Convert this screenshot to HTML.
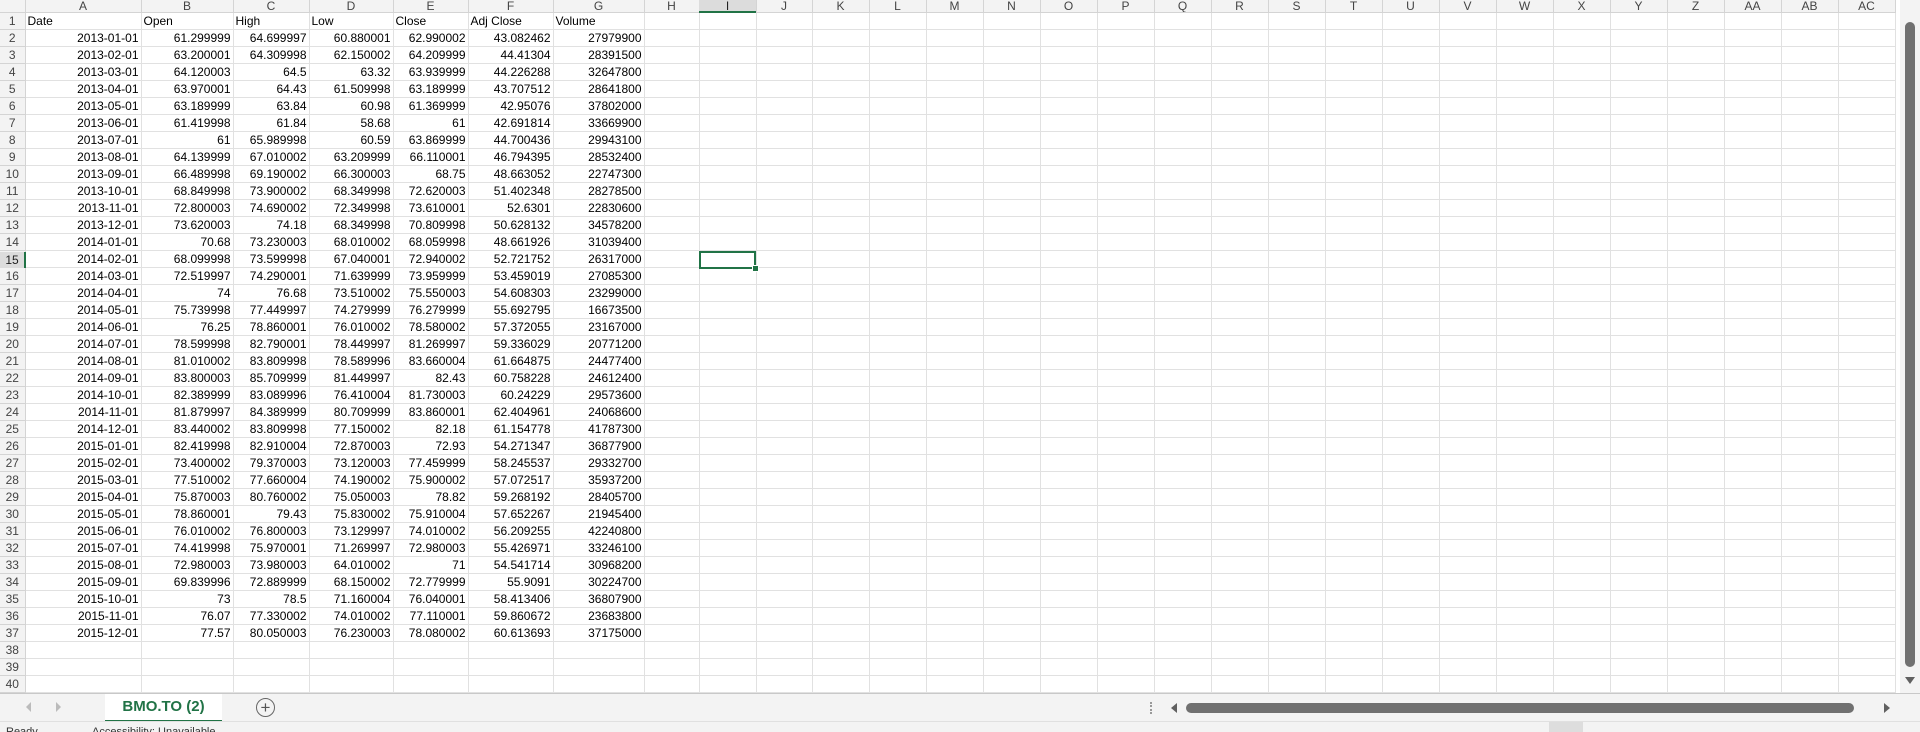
<!DOCTYPE html>
<html><head><meta charset="utf-8"><style>
body{margin:0;width:1920px;height:731px;overflow:hidden;background:#fff;font-family:"Liberation Sans",sans-serif;position:relative}
#g{position:absolute;left:0;top:0;width:1900px;height:693px;overflow:hidden}
table{border-collapse:collapse;table-layout:fixed;font-size:12px;color:#000}
td{height:16px;border:1px solid #e1e1e1;padding:0 2px;white-space:nowrap;overflow:hidden;text-align:right;line-height:16px}
tr.h td{height:12px;line-height:12px;background:#f3f3f3;color:#444;text-align:center;border-color:#d4d4d4;font-size:12px;border-top:0}
td.r{background:#f3f3f3;color:#444;text-align:center;border-color:#d4d4d4;border-left:0;font-size:12px;padding:0}
td.l{text-align:left}
#sel{position:absolute;left:699px;top:251px;width:53px;height:14px;border:2px solid #217346}
#sel:after{content:"";position:absolute;right:-5px;bottom:-5px;width:5px;height:5px;background:#217346;border:1px solid #fff}
#ih{position:absolute;left:699px;top:0;width:57px;height:11px;background:#dcdcdc;border-bottom:2px solid #217346;text-align:center;font-size:12px;line-height:12px;color:#222}
#rh{position:absolute;left:0;top:252px;width:24px;height:16px;background:#dcdcdc;border-right:2px solid #217346;text-align:center;font-size:12px;line-height:16px;color:#222}
#vs{position:absolute;left:1900px;top:0;width:20px;height:693px;background:#f3f3f3}
#vt{position:absolute;left:5px;top:22px;width:10px;height:645px;background:#707070;border-radius:5px}
#bar{position:absolute;left:0;top:693px;width:1920px;height:27px;background:#f3f3f3;border-top:1px solid #c8c8c8}
#tab{position:absolute;left:105px;top:0;width:117px;height:26px;background:#fff;border-bottom:2px solid #217346;color:#217346;font-weight:bold;font-size:15px;text-align:center;line-height:26px}
#ht{position:absolute;left:1186px;top:9px;width:668px;height:10px;background:#707070;border-radius:5px}
#st{position:absolute;left:0;top:721px;width:1920px;height:10px;background:#f3f3f3;border-top:1px solid #e0e0e0;font-size:11px;color:#333;overflow:hidden}
</style></head><body>
<div id="g"><table>
<colgroup><col style="width:25px"><col style="width:116px"><col style="width:92px"><col style="width:76px"><col style="width:84px"><col style="width:75px"><col style="width:85px"><col style="width:91px"><col style="width:55px"><col style="width:57px"><col style="width:56px"><col style="width:57px" span="19"></colgroup>
<tr class="h"><td style="border-left:0"></td><td>A</td><td>B</td><td>C</td><td>D</td><td>E</td><td>F</td><td>G</td><td>H</td><td>I</td><td>J</td><td>K</td><td>L</td><td>M</td><td>N</td><td>O</td><td>P</td><td>Q</td><td>R</td><td>S</td><td>T</td><td>U</td><td>V</td><td>W</td><td>X</td><td>Y</td><td>Z</td><td>AA</td><td>AB</td><td>AC</td></tr>
<tr><td class="r">1</td><td class="l">Date</td><td class="l">Open</td><td class="l">High</td><td class="l">Low</td><td class="l">Close</td><td class="l">Adj Close</td><td class="l">Volume</td><td></td><td></td><td></td><td></td><td></td><td></td><td></td><td></td><td></td><td></td><td></td><td></td><td></td><td></td><td></td><td></td><td></td><td></td><td></td><td></td><td></td><td></td></tr>
<tr><td class="r">2</td><td>2013-01-01</td><td>61.299999</td><td>64.699997</td><td>60.880001</td><td>62.990002</td><td>43.082462</td><td>27979900</td><td></td><td></td><td></td><td></td><td></td><td></td><td></td><td></td><td></td><td></td><td></td><td></td><td></td><td></td><td></td><td></td><td></td><td></td><td></td><td></td><td></td><td></td></tr>
<tr><td class="r">3</td><td>2013-02-01</td><td>63.200001</td><td>64.309998</td><td>62.150002</td><td>64.209999</td><td>44.41304</td><td>28391500</td><td></td><td></td><td></td><td></td><td></td><td></td><td></td><td></td><td></td><td></td><td></td><td></td><td></td><td></td><td></td><td></td><td></td><td></td><td></td><td></td><td></td><td></td></tr>
<tr><td class="r">4</td><td>2013-03-01</td><td>64.120003</td><td>64.5</td><td>63.32</td><td>63.939999</td><td>44.226288</td><td>32647800</td><td></td><td></td><td></td><td></td><td></td><td></td><td></td><td></td><td></td><td></td><td></td><td></td><td></td><td></td><td></td><td></td><td></td><td></td><td></td><td></td><td></td><td></td></tr>
<tr><td class="r">5</td><td>2013-04-01</td><td>63.970001</td><td>64.43</td><td>61.509998</td><td>63.189999</td><td>43.707512</td><td>28641800</td><td></td><td></td><td></td><td></td><td></td><td></td><td></td><td></td><td></td><td></td><td></td><td></td><td></td><td></td><td></td><td></td><td></td><td></td><td></td><td></td><td></td><td></td></tr>
<tr><td class="r">6</td><td>2013-05-01</td><td>63.189999</td><td>63.84</td><td>60.98</td><td>61.369999</td><td>42.95076</td><td>37802000</td><td></td><td></td><td></td><td></td><td></td><td></td><td></td><td></td><td></td><td></td><td></td><td></td><td></td><td></td><td></td><td></td><td></td><td></td><td></td><td></td><td></td><td></td></tr>
<tr><td class="r">7</td><td>2013-06-01</td><td>61.419998</td><td>61.84</td><td>58.68</td><td>61</td><td>42.691814</td><td>33669900</td><td></td><td></td><td></td><td></td><td></td><td></td><td></td><td></td><td></td><td></td><td></td><td></td><td></td><td></td><td></td><td></td><td></td><td></td><td></td><td></td><td></td><td></td></tr>
<tr><td class="r">8</td><td>2013-07-01</td><td>61</td><td>65.989998</td><td>60.59</td><td>63.869999</td><td>44.700436</td><td>29943100</td><td></td><td></td><td></td><td></td><td></td><td></td><td></td><td></td><td></td><td></td><td></td><td></td><td></td><td></td><td></td><td></td><td></td><td></td><td></td><td></td><td></td><td></td></tr>
<tr><td class="r">9</td><td>2013-08-01</td><td>64.139999</td><td>67.010002</td><td>63.209999</td><td>66.110001</td><td>46.794395</td><td>28532400</td><td></td><td></td><td></td><td></td><td></td><td></td><td></td><td></td><td></td><td></td><td></td><td></td><td></td><td></td><td></td><td></td><td></td><td></td><td></td><td></td><td></td><td></td></tr>
<tr><td class="r">10</td><td>2013-09-01</td><td>66.489998</td><td>69.190002</td><td>66.300003</td><td>68.75</td><td>48.663052</td><td>22747300</td><td></td><td></td><td></td><td></td><td></td><td></td><td></td><td></td><td></td><td></td><td></td><td></td><td></td><td></td><td></td><td></td><td></td><td></td><td></td><td></td><td></td><td></td></tr>
<tr><td class="r">11</td><td>2013-10-01</td><td>68.849998</td><td>73.900002</td><td>68.349998</td><td>72.620003</td><td>51.402348</td><td>28278500</td><td></td><td></td><td></td><td></td><td></td><td></td><td></td><td></td><td></td><td></td><td></td><td></td><td></td><td></td><td></td><td></td><td></td><td></td><td></td><td></td><td></td><td></td></tr>
<tr><td class="r">12</td><td>2013-11-01</td><td>72.800003</td><td>74.690002</td><td>72.349998</td><td>73.610001</td><td>52.6301</td><td>22830600</td><td></td><td></td><td></td><td></td><td></td><td></td><td></td><td></td><td></td><td></td><td></td><td></td><td></td><td></td><td></td><td></td><td></td><td></td><td></td><td></td><td></td><td></td></tr>
<tr><td class="r">13</td><td>2013-12-01</td><td>73.620003</td><td>74.18</td><td>68.349998</td><td>70.809998</td><td>50.628132</td><td>34578200</td><td></td><td></td><td></td><td></td><td></td><td></td><td></td><td></td><td></td><td></td><td></td><td></td><td></td><td></td><td></td><td></td><td></td><td></td><td></td><td></td><td></td><td></td></tr>
<tr><td class="r">14</td><td>2014-01-01</td><td>70.68</td><td>73.230003</td><td>68.010002</td><td>68.059998</td><td>48.661926</td><td>31039400</td><td></td><td></td><td></td><td></td><td></td><td></td><td></td><td></td><td></td><td></td><td></td><td></td><td></td><td></td><td></td><td></td><td></td><td></td><td></td><td></td><td></td><td></td></tr>
<tr><td class="r">15</td><td>2014-02-01</td><td>68.099998</td><td>73.599998</td><td>67.040001</td><td>72.940002</td><td>52.721752</td><td>26317000</td><td></td><td></td><td></td><td></td><td></td><td></td><td></td><td></td><td></td><td></td><td></td><td></td><td></td><td></td><td></td><td></td><td></td><td></td><td></td><td></td><td></td><td></td></tr>
<tr><td class="r">16</td><td>2014-03-01</td><td>72.519997</td><td>74.290001</td><td>71.639999</td><td>73.959999</td><td>53.459019</td><td>27085300</td><td></td><td></td><td></td><td></td><td></td><td></td><td></td><td></td><td></td><td></td><td></td><td></td><td></td><td></td><td></td><td></td><td></td><td></td><td></td><td></td><td></td><td></td></tr>
<tr><td class="r">17</td><td>2014-04-01</td><td>74</td><td>76.68</td><td>73.510002</td><td>75.550003</td><td>54.608303</td><td>23299000</td><td></td><td></td><td></td><td></td><td></td><td></td><td></td><td></td><td></td><td></td><td></td><td></td><td></td><td></td><td></td><td></td><td></td><td></td><td></td><td></td><td></td><td></td></tr>
<tr><td class="r">18</td><td>2014-05-01</td><td>75.739998</td><td>77.449997</td><td>74.279999</td><td>76.279999</td><td>55.692795</td><td>16673500</td><td></td><td></td><td></td><td></td><td></td><td></td><td></td><td></td><td></td><td></td><td></td><td></td><td></td><td></td><td></td><td></td><td></td><td></td><td></td><td></td><td></td><td></td></tr>
<tr><td class="r">19</td><td>2014-06-01</td><td>76.25</td><td>78.860001</td><td>76.010002</td><td>78.580002</td><td>57.372055</td><td>23167000</td><td></td><td></td><td></td><td></td><td></td><td></td><td></td><td></td><td></td><td></td><td></td><td></td><td></td><td></td><td></td><td></td><td></td><td></td><td></td><td></td><td></td><td></td></tr>
<tr><td class="r">20</td><td>2014-07-01</td><td>78.599998</td><td>82.790001</td><td>78.449997</td><td>81.269997</td><td>59.336029</td><td>20771200</td><td></td><td></td><td></td><td></td><td></td><td></td><td></td><td></td><td></td><td></td><td></td><td></td><td></td><td></td><td></td><td></td><td></td><td></td><td></td><td></td><td></td><td></td></tr>
<tr><td class="r">21</td><td>2014-08-01</td><td>81.010002</td><td>83.809998</td><td>78.589996</td><td>83.660004</td><td>61.664875</td><td>24477400</td><td></td><td></td><td></td><td></td><td></td><td></td><td></td><td></td><td></td><td></td><td></td><td></td><td></td><td></td><td></td><td></td><td></td><td></td><td></td><td></td><td></td><td></td></tr>
<tr><td class="r">22</td><td>2014-09-01</td><td>83.800003</td><td>85.709999</td><td>81.449997</td><td>82.43</td><td>60.758228</td><td>24612400</td><td></td><td></td><td></td><td></td><td></td><td></td><td></td><td></td><td></td><td></td><td></td><td></td><td></td><td></td><td></td><td></td><td></td><td></td><td></td><td></td><td></td><td></td></tr>
<tr><td class="r">23</td><td>2014-10-01</td><td>82.389999</td><td>83.089996</td><td>76.410004</td><td>81.730003</td><td>60.24229</td><td>29573600</td><td></td><td></td><td></td><td></td><td></td><td></td><td></td><td></td><td></td><td></td><td></td><td></td><td></td><td></td><td></td><td></td><td></td><td></td><td></td><td></td><td></td><td></td></tr>
<tr><td class="r">24</td><td>2014-11-01</td><td>81.879997</td><td>84.389999</td><td>80.709999</td><td>83.860001</td><td>62.404961</td><td>24068600</td><td></td><td></td><td></td><td></td><td></td><td></td><td></td><td></td><td></td><td></td><td></td><td></td><td></td><td></td><td></td><td></td><td></td><td></td><td></td><td></td><td></td><td></td></tr>
<tr><td class="r">25</td><td>2014-12-01</td><td>83.440002</td><td>83.809998</td><td>77.150002</td><td>82.18</td><td>61.154778</td><td>41787300</td><td></td><td></td><td></td><td></td><td></td><td></td><td></td><td></td><td></td><td></td><td></td><td></td><td></td><td></td><td></td><td></td><td></td><td></td><td></td><td></td><td></td><td></td></tr>
<tr><td class="r">26</td><td>2015-01-01</td><td>82.419998</td><td>82.910004</td><td>72.870003</td><td>72.93</td><td>54.271347</td><td>36877900</td><td></td><td></td><td></td><td></td><td></td><td></td><td></td><td></td><td></td><td></td><td></td><td></td><td></td><td></td><td></td><td></td><td></td><td></td><td></td><td></td><td></td><td></td></tr>
<tr><td class="r">27</td><td>2015-02-01</td><td>73.400002</td><td>79.370003</td><td>73.120003</td><td>77.459999</td><td>58.245537</td><td>29332700</td><td></td><td></td><td></td><td></td><td></td><td></td><td></td><td></td><td></td><td></td><td></td><td></td><td></td><td></td><td></td><td></td><td></td><td></td><td></td><td></td><td></td><td></td></tr>
<tr><td class="r">28</td><td>2015-03-01</td><td>77.510002</td><td>77.660004</td><td>74.190002</td><td>75.900002</td><td>57.072517</td><td>35937200</td><td></td><td></td><td></td><td></td><td></td><td></td><td></td><td></td><td></td><td></td><td></td><td></td><td></td><td></td><td></td><td></td><td></td><td></td><td></td><td></td><td></td><td></td></tr>
<tr><td class="r">29</td><td>2015-04-01</td><td>75.870003</td><td>80.760002</td><td>75.050003</td><td>78.82</td><td>59.268192</td><td>28405700</td><td></td><td></td><td></td><td></td><td></td><td></td><td></td><td></td><td></td><td></td><td></td><td></td><td></td><td></td><td></td><td></td><td></td><td></td><td></td><td></td><td></td><td></td></tr>
<tr><td class="r">30</td><td>2015-05-01</td><td>78.860001</td><td>79.43</td><td>75.830002</td><td>75.910004</td><td>57.652267</td><td>21945400</td><td></td><td></td><td></td><td></td><td></td><td></td><td></td><td></td><td></td><td></td><td></td><td></td><td></td><td></td><td></td><td></td><td></td><td></td><td></td><td></td><td></td><td></td></tr>
<tr><td class="r">31</td><td>2015-06-01</td><td>76.010002</td><td>76.800003</td><td>73.129997</td><td>74.010002</td><td>56.209255</td><td>42240800</td><td></td><td></td><td></td><td></td><td></td><td></td><td></td><td></td><td></td><td></td><td></td><td></td><td></td><td></td><td></td><td></td><td></td><td></td><td></td><td></td><td></td><td></td></tr>
<tr><td class="r">32</td><td>2015-07-01</td><td>74.419998</td><td>75.970001</td><td>71.269997</td><td>72.980003</td><td>55.426971</td><td>33246100</td><td></td><td></td><td></td><td></td><td></td><td></td><td></td><td></td><td></td><td></td><td></td><td></td><td></td><td></td><td></td><td></td><td></td><td></td><td></td><td></td><td></td><td></td></tr>
<tr><td class="r">33</td><td>2015-08-01</td><td>72.980003</td><td>73.980003</td><td>64.010002</td><td>71</td><td>54.541714</td><td>30968200</td><td></td><td></td><td></td><td></td><td></td><td></td><td></td><td></td><td></td><td></td><td></td><td></td><td></td><td></td><td></td><td></td><td></td><td></td><td></td><td></td><td></td><td></td></tr>
<tr><td class="r">34</td><td>2015-09-01</td><td>69.839996</td><td>72.889999</td><td>68.150002</td><td>72.779999</td><td>55.9091</td><td>30224700</td><td></td><td></td><td></td><td></td><td></td><td></td><td></td><td></td><td></td><td></td><td></td><td></td><td></td><td></td><td></td><td></td><td></td><td></td><td></td><td></td><td></td><td></td></tr>
<tr><td class="r">35</td><td>2015-10-01</td><td>73</td><td>78.5</td><td>71.160004</td><td>76.040001</td><td>58.413406</td><td>36807900</td><td></td><td></td><td></td><td></td><td></td><td></td><td></td><td></td><td></td><td></td><td></td><td></td><td></td><td></td><td></td><td></td><td></td><td></td><td></td><td></td><td></td><td></td></tr>
<tr><td class="r">36</td><td>2015-11-01</td><td>76.07</td><td>77.330002</td><td>74.010002</td><td>77.110001</td><td>59.860672</td><td>23683800</td><td></td><td></td><td></td><td></td><td></td><td></td><td></td><td></td><td></td><td></td><td></td><td></td><td></td><td></td><td></td><td></td><td></td><td></td><td></td><td></td><td></td><td></td></tr>
<tr><td class="r">37</td><td>2015-12-01</td><td>77.57</td><td>80.050003</td><td>76.230003</td><td>78.080002</td><td>60.613693</td><td>37175000</td><td></td><td></td><td></td><td></td><td></td><td></td><td></td><td></td><td></td><td></td><td></td><td></td><td></td><td></td><td></td><td></td><td></td><td></td><td></td><td></td><td></td><td></td></tr>
<tr><td class="r">38</td><td></td><td></td><td></td><td></td><td></td><td></td><td></td><td></td><td></td><td></td><td></td><td></td><td></td><td></td><td></td><td></td><td></td><td></td><td></td><td></td><td></td><td></td><td></td><td></td><td></td><td></td><td></td><td></td><td></td></tr>
<tr><td class="r">39</td><td></td><td></td><td></td><td></td><td></td><td></td><td></td><td></td><td></td><td></td><td></td><td></td><td></td><td></td><td></td><td></td><td></td><td></td><td></td><td></td><td></td><td></td><td></td><td></td><td></td><td></td><td></td><td></td><td></td></tr>
<tr><td class="r">40</td><td></td><td></td><td></td><td></td><td></td><td></td><td></td><td></td><td></td><td></td><td></td><td></td><td></td><td></td><td></td><td></td><td></td><td></td><td></td><td></td><td></td><td></td><td></td><td></td><td></td><td></td><td></td><td></td><td></td></tr>
</table>
<div id="ih">I</div><div id="rh">15</div><div id="sel"></div>
</div>
<div id="vs"><div id="vt"></div><div style="position:absolute;left:5px;top:677px;width:0;height:0;border-left:5px solid transparent;border-right:5px solid transparent;border-top:7px solid #606060"></div></div>
<div id="bar">
<div style="position:absolute;left:26px;top:8px;border-right:5px solid #bbb;border-top:5px solid transparent;border-bottom:5px solid transparent"></div>
<div style="position:absolute;left:56px;top:8px;border-left:5px solid #bbb;border-top:5px solid transparent;border-bottom:5px solid transparent"></div>
<div id="tab">BMO.TO (2)</div>
<div style="position:absolute;left:256px;top:4px;width:17px;height:17px;border:1px solid #666;border-radius:50%;text-align:center;line-height:17px;font-size:17px;color:#555">+</div>
<div style="position:absolute;left:1150px;top:8px;width:2px;height:12px;border-left:2px dotted #999"></div>
<div style="position:absolute;left:1171px;top:9px;border-right:6px solid #606060;border-top:5px solid transparent;border-bottom:5px solid transparent"></div>
<div id="ht"></div>
<div style="position:absolute;left:1884px;top:9px;border-left:6px solid #606060;border-top:5px solid transparent;border-bottom:5px solid transparent"></div>
</div>
<div id="st"><span style="position:absolute;left:6px;top:4px">Ready</span><span style="position:absolute;left:92px;top:4px">Accessibility: Unavailable</span>
<div style="position:absolute;left:1549px;top:0;width:34px;height:10px;background:#ddd"></div></div>
</body></html>
